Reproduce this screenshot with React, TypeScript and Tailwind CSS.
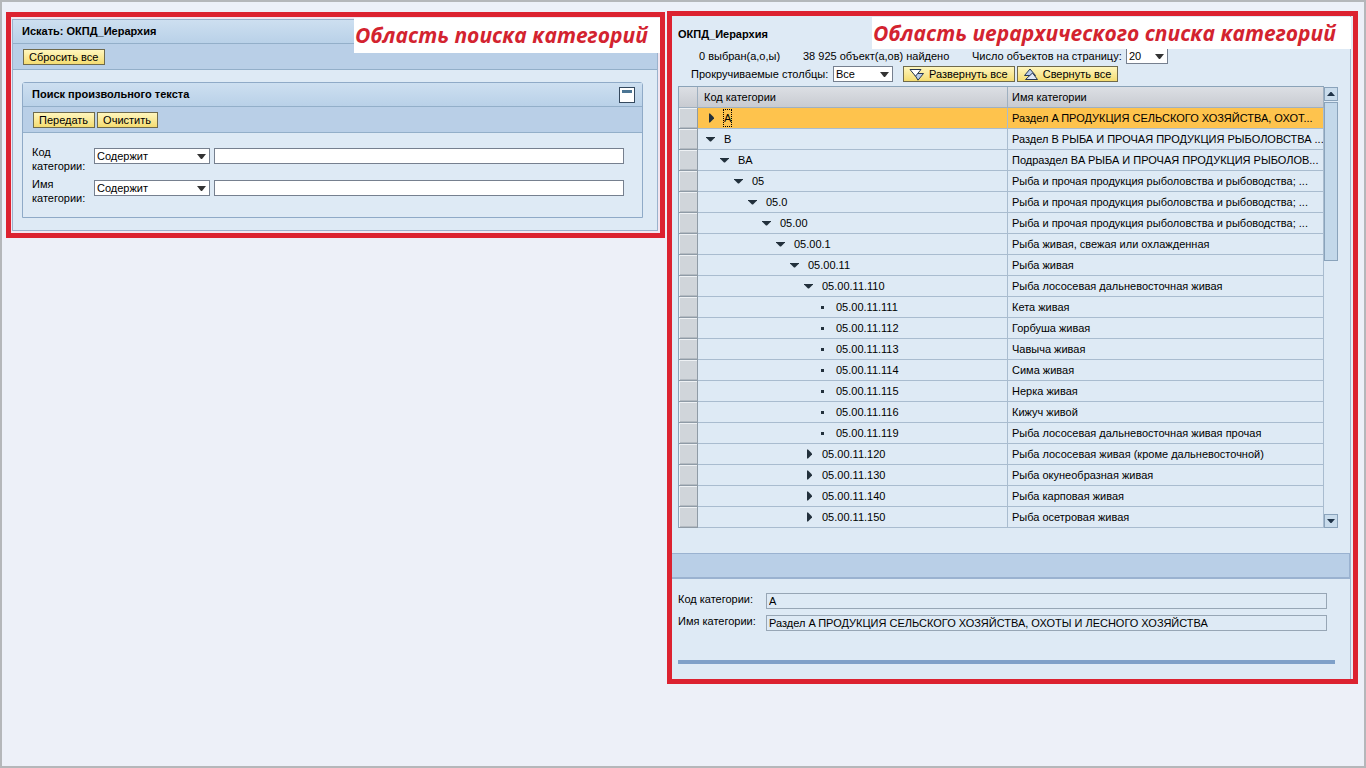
import React, {useState} from "react";
import clsx from "clsx";

type NodeState = "open" | "closed" | "leaf";

interface Category {
    code: string;
    name: string;
    level: number;
    state: NodeState;
}

const categories: Category[] = [
    {code: "A", name: "Раздел A ПРОДУКЦИЯ СЕЛЬСКОГО ХОЗЯЙСТВА, ОХОТ...", level: 0, state: "closed"},
    {code: "B", name: "Раздел B РЫБА И ПРОЧАЯ ПРОДУКЦИЯ РЫБОЛОВСТВА ...", level: 0, state: "open"},
    {code: "BA", name: "Подраздел BA РЫБА И ПРОЧАЯ ПРОДУКЦИЯ РЫБОЛОВ...", level: 1, state: "open"},
    {code: "05", name: "Рыба и прочая продукция рыболовства и рыбоводства; ...", level: 2, state: "open"},
    {code: "05.0", name: "Рыба и прочая продукция рыболовства и рыбоводства; ...", level: 3, state: "open"},
    {code: "05.00", name: "Рыба и прочая продукция рыболовства и рыбоводства; ...", level: 4, state: "open"},
    {code: "05.00.1", name: "Рыба живая, свежая или охлажденная", level: 5, state: "open"},
    {code: "05.00.11", name: "Рыба живая", level: 6, state: "open"},
    {code: "05.00.11.110", name: "Рыба лососевая дальневосточная живая", level: 7, state: "open"},
    {code: "05.00.11.111", name: "Кета живая", level: 8, state: "leaf"},
    {code: "05.00.11.112", name: "Горбуша живая", level: 8, state: "leaf"},
    {code: "05.00.11.113", name: "Чавыча живая", level: 8, state: "leaf"},
    {code: "05.00.11.114", name: "Сима живая", level: 8, state: "leaf"},
    {code: "05.00.11.115", name: "Нерка живая", level: 8, state: "leaf"},
    {code: "05.00.11.116", name: "Кижуч живой", level: 8, state: "leaf"},
    {code: "05.00.11.119", name: "Рыба лососевая дальневосточная живая прочая", level: 8, state: "leaf"},
    {code: "05.00.11.120", name: "Рыба лососевая живая (кроме дальневосточной)", level: 7, state: "closed"},
    {code: "05.00.11.130", name: "Рыба окунеобразная живая", level: 7, state: "closed"},
    {code: "05.00.11.140", name: "Рыба карповая живая", level: 7, state: "closed"},
    {code: "05.00.11.150", name: "Рыба осетровая живая", level: 7, state: "closed"},
];

function Button({children}: { children: React.ReactNode }) {
    return (
        <button
            type="button"
            className="flex h-4 items-center gap-1 whitespace-nowrap border border-[#6f6a4c] bg-linear-to-b from-[#fff6bd] to-[#f4dc70] pl-[5px] pr-[6px] leading-[14px]">
            {children}
        </button>
    );
}

function Select({id, label, value, className}: { id?: string; label?: string; value: string; className: string }) {
    return (
        <span className={clsx("relative block shrink-0", className)}>
            <select id={id} aria-label={label} defaultValue={value}
                    className="block h-4 w-full appearance-none border border-[#76808f] bg-white pl-[2px] leading-[14px]">
                <option>{value}</option>
            </select>
            <svg viewBox="0 0 9 5" className="pointer-events-none absolute right-1 top-[6px] h-[5px] w-[9px]">
                <path d="M0 0h9L5 5H4z" fill="#333"/>
            </svg>
        </span>
    );
}

function Caption({children, className}: { children: React.ReactNode; className: string }) {
    return (
        <div
            className={clsx("absolute top-px z-10 whitespace-nowrap bg-white pl-px font-['Open_Sans',sans-serif] text-[21px] font-bold italic text-[#d3232f]", className)}>
            {children}
        </div>
    );
}

function NodeIcon({state}: { state: NodeState }) {
    return (
        <svg viewBox="0 0 10 10" className="h-[10px] w-[10px] shrink-0" fill="#22303c">
            {state === "open" && <path d="M0 3h9v.5L5 7.5H4L0 3.500z"/>}
            {state === "closed" && <path d="M3 .5h1L8 4.500v1L4 9.500H3z"/>}
            {state === "leaf" && <rect x="3" y="4" width="3" height="3"/>}
        </svg>
    );
}

function SearchField({id, label}: { id: string; label: string }) {
    return (
        <div className="flex h-8 items-start">
            <label htmlFor={id} className="w-[62px] shrink-0 leading-[14px]">{label}</label>
            <div className="flex flex-1 gap-1 pt-[3px]">
                <Select label={label} value="Содержит" className="w-[116px]"/>
                <input id={id} type="text" className="h-4 min-w-0 flex-1 border border-[#76808f] bg-white px-1"/>
            </div>
        </div>
    );
}

function SearchPanel() {
    return (
        <section className="relative border-[5px] border-[#dc2230] bg-[#f3e6f0] pb-[2px] pl-px pr-[2px] pt-[2px]">
            <Caption className="right-0 w-[306px] leading-[35px]">Область поиска категорий</Caption>
            <div className="border border-[#9ab2cc] bg-[#deeaf5]">
                <h1 className="h-6 border-b border-[#93afc9] bg-linear-to-b from-[#cddff0] to-[#b9d1e8] px-[9px] font-bold leading-[23px]">
                    Искать: ОКПД_Иерархия
                </h1>
                <div className="flex h-[26px] items-center border-b border-[#93afc9] bg-[#b9cfe7] px-[10px]">
                    <Button>Сбросить все</Button>
                </div>
                <div className="pb-3 pl-[9px] pr-[14px] pt-3">
                    <div className="rounded-t-[3px] border border-[#8faac7]">
                        <div className="flex h-6 items-center justify-between border-b border-[#93afc9] bg-linear-to-b from-[#cddff0] to-[#b9d1e8] pl-[9px] pr-[7px]">
                            <h2 className="font-bold">Поиск произвольного текста</h2>
                            <button type="button" title="Свернуть"
                                    className="h-4 w-4 border border-[#35495e] bg-white px-[2px] pb-[9px] pt-[2px]">
                                <span className="block h-[3px] bg-[#4c7593]"/>
                            </button>
                        </div>
                        <div className="flex h-[26px] items-center gap-[2px] border-b border-[#93afc9] bg-[#b9cfe7] px-[10px]">
                            <Button>Передать</Button>
                            <Button>Очистить</Button>
                        </div>
                        <div className="pb-2 pl-[9px] pr-[18px] pt-3">
                            <SearchField id="code" label="Код категории:"/>
                            <SearchField id="name" label="Имя категории:"/>
                        </div>
                    </div>
                </div>
            </div>
        </section>
    );
}

function CategoryTable() {
    const [selected, setSelected] = useState("A");

    return (
        <div className="flex">
            <div className="min-w-0 flex-1">
                <table className="w-full table-fixed border-separate border-spacing-0 border-l border-t border-[#8ba3b8] text-left">
                    <colgroup>
                        <col className="w-[19px]"/>
                        <col className="w-[310px]"/>
                        <col/>
                    </colgroup>
                    <thead>
                        <tr className="h-[21px] bg-linear-to-b from-[#dcdfe4] to-[#c7cad0]">
                            <th className="border-b border-r border-[#9fb0c0] p-0"/>
                            <th className="border-b border-r border-[#9fb0c0] py-0 pl-[6px] font-normal leading-5">Код категории</th>
                            <th className="border-b border-r border-[#9fb0c0] py-0 pl-1 font-normal leading-5">Имя категории</th>
                        </tr>
                    </thead>
                    <tbody>
                        {categories.map((item) => (
                            <tr key={item.code} onClick={() => setSelected(item.code)}
                                className={clsx("h-[21px]", item.code === selected ? "bg-[#fec34d]" : "bg-[#deeaf5]")}>
                                <td className="border-b border-r border-[#8f9ba6] bg-[#d0d5da] p-0 shadow-[inset_1px_1px_0_#eef1f4,inset_0_-1px_0_#b4bbc2]"/>
                                <td className="border-b border-r border-[#a9bccf] p-0">
                                    <div className="flex h-5 items-center gap-2 whitespace-nowrap"
                                         style={{paddingLeft: 8 + item.level * 14}}>
                                        <NodeIcon state={item.state}/>
                                        <span className={clsx(item.code === selected && "outline-1 outline-dotted outline-black")}>
                                            {item.code}
                                        </span>
                                    </div>
                                </td>
                                <td className="overflow-hidden whitespace-nowrap border-b border-r border-[#a9bccf] py-0 pl-1 pr-0 leading-5">
                                    {item.name}
                                </td>
                            </tr>
                        ))}
                    </tbody>
                </table>
            </div>
            <div className="flex w-[14px] flex-col gap-px pt-px">
                <button type="button" title="Вверх"
                        className="flex h-[14px] items-center justify-center border border-[#8aa3bb] bg-[#c9dcec]">
                    <svg viewBox="0 0 8 4" className="h-1 w-2"><path d="M0 4l3.5-4h1L8 4z" fill="#1f3347"/></svg>
                </button>
                <div className="h-[159px] border border-[#8aa3bb] bg-[#c3d8ea]"/>
                <button type="button" title="Вниз"
                        className="mt-auto flex h-[14px] items-center justify-center border border-[#8aa3bb] bg-[#c9dcec]">
                    <svg viewBox="0 0 8 4" className="h-1 w-2"><path d="M0 0l3.5 4h1L8 0z" fill="#1f3347"/></svg>
                </button>
            </div>
        </div>
    );
}

function HierarchyPanel() {
    return (
        <section className="relative -mt-px border-[5px] border-[#dc2230] bg-[#e6ebf5] pr-[2px]">
            <Caption className="right-[2px] w-[479px] leading-8">Область иерархического списка категорий</Caption>
            <div className="border-r border-[#a3b4cc] bg-[#deeaf5] pb-[15px] pt-[10px]">
                <h1 className="h-[22px] px-[6px] font-bold leading-4">ОКПД_Иерархия</h1>
                <div className="flex h-[18px] items-start whitespace-nowrap pl-[27px] leading-4">
                    <span className="w-[104px]">0 выбран(а,о,ы)</span>
                    <span className="w-[169px]">38 925 объект(а,ов) найдено</span>
                    <label htmlFor="pageSize" className="w-[154px]">Число объектов на страницу:</label>
                    <Select id="pageSize" value="20" className="w-[42px]"/>
                </div>
                <div className="flex h-5 items-start whitespace-nowrap pl-[19px] leading-4">
                    <label htmlFor="columns" className="w-[142px]">Прокручиваемые столбцы:</label>
                    <Select id="columns" value="Все" className="w-[60px]"/>
                    <div className="flex gap-[2px] pl-[10px]">
                        <Button>
                            <svg viewBox="0 0 16 13" className="h-[13px] w-4" fill="#fff" stroke="#27364f">
                                <path d="M5 5.500h9.500L9 12.200z" fill="#b9cdeb"/>
                                <path d="M1 1.500h11L6.500 8.200z"/>
                            </svg>
                            Развернуть все
                        </Button>
                        <Button>
                            <svg viewBox="0 0 16 13" className="h-[13px] w-4" fill="#b9cdeb" stroke="#27364f">
                                <path d="M1.500 7.500h11L7 1z"/>
                                <path d="M2.500 11.500h12L9.500 5z" fill="#dfe8f6"/>
                            </svg>
                            Свернуть все
                        </Button>
                    </div>
                </div>
                <div className="pl-[6px] pr-3">
                    <CategoryTable/>
                </div>
                <div className="mt-[25px] h-[26px] border border-b-2 border-l-0 border-[#9ab2d0] bg-[#b9cfe7]"/>
                <div className="flex flex-col gap-[6px] pb-[29px] pl-[6px] pr-[23px] pt-[14px]">
                    <div className="flex">
                        <label htmlFor="selCode" className="w-[88px] leading-3">Код категории:</label>
                        <input id="selCode" readOnly value="A"
                               className="h-4 min-w-0 flex-1 border border-[#97a6b5] px-[2px]"/>
                    </div>
                    <div className="flex">
                        <label htmlFor="selName" className="w-[88px] leading-3">Имя категории:</label>
                        <input id="selName" readOnly value="Раздел A ПРОДУКЦИЯ СЕЛЬСКОГО ХОЗЯЙСТВА, ОХОТЫ И ЛЕСНОГО ХОЗЯЙСТВА"
                               className="h-4 min-w-0 flex-1 border border-[#97a6b5] px-[2px]"/>
                    </div>
                </div>
                <div className="ml-[6px] mr-[15px] h-1 bg-[#7fa0c8]"/>
            </div>
        </section>
    );
}

export default function App() {
    return (
        <div className="min-h-screen border-2 border-[#b5b7ba] bg-[#edf0f8] pl-1 pr-[6px] pt-[10px] font-['Liberation_Sans',Arial,sans-serif] text-[11px] text-black">
            <main className="grid grid-cols-[minmax(0,659fr)_minmax(0,691fr)] items-start gap-[2px]">
                <SearchPanel/>
                <HierarchyPanel/>
            </main>
        </div>
    );
}
